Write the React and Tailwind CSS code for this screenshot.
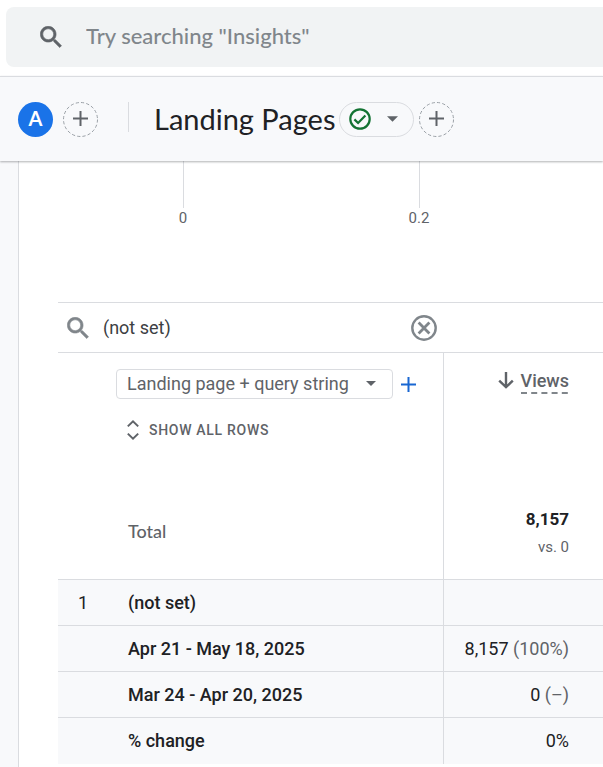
import React, { useState } from 'react';

const ROWS = [
    { index: '1', label: '(not set)' },
    { label: 'Apr 21 - May 18, 2025', value: '8,157', share: '(100%)' },
    { label: 'Mar 24 - Apr 20, 2025', value: '0', share: '(–)' },
    { label: '% change', value: '0%' },
];

const TICKS = ['0', '0.2'];

function SearchIcon({ className }) {
    return (
        <svg viewBox="2.7 2.7 18.2 18.2" fill="currentColor" stroke="currentColor" strokeWidth="0.5" className={className} aria-hidden="true">
            <path d="M15.5 14h-.79l-.28-.27C15.41 12.59 16 11.11 16 9.5 16 5.91 13.09 3 9.5 3S3 5.91 3 9.5 5.91 16 9.5 16c1.61 0 3.09-.59 4.23-1.57l.27.28v.79l5 4.99L20.49 19l-4.99-5zm-6 0C7.01 14 5 11.99 5 9.5S7.01 5 9.5 5 14 7.01 14 9.5 11.99 14 9.5 14z" />
        </svg>
    );
}

function PlusIcon({ className }) {
    return (
        <svg viewBox="0 0 15 15" fill="currentColor" className={className} aria-hidden="true">
            <path d="M6.5 0h2v6.5H15v2H8.5V15h-2V8.5H0v-2h6.5z" />
        </svg>
    );
}

function CaretIcon({ className }) {
    return (
        <svg viewBox="0 0 10 5" fill="currentColor" className={className} aria-hidden="true">
            <path d="M0 0h10L5 5z" />
        </svg>
    );
}

function DashedAddButton({ label }) {
    return (
        <button type="button" aria-label={label} className="relative flex size-[35px] shrink-0 items-center justify-center text-[#5f6368]">
            <svg viewBox="0 0 35 35" fill="none" className="absolute inset-0 size-full" aria-hidden="true">
                <circle cx="17.5" cy="17.5" r="17" stroke="#9aa0a6" strokeDasharray="3.2 2.14" />
            </svg>
            <PlusIcon className="mb-0.5 size-[15px]" />
        </button>
    );
}

function TopSearch() {
    return (
        <div className="bg-white pt-[7px] pb-[9px] pl-1.5">
            <label className="flex h-[60px] items-center rounded-l-lg bg-[#f1f3f4] pl-[34px]">
                <SearchIcon className="size-[22px] shrink-0 text-[#5f6368]" />
                <input
                    type="search"
                    aria-label="Search"
                    placeholder={'Try searching "Insights"'}
                    className="ml-6 min-w-0 flex-1 bg-transparent pb-1 font-[Lato,sans-serif] text-[22px] font-medium text-[#202124] outline-none placeholder:text-[#80868b]"
                />
            </label>
        </div>
    );
}

function ReportHeader() {
    return (
        <header className="relative flex h-[85px] items-center border-t border-[#dadce0] bg-[#f8f9fb] pl-[18px] shadow-[0_1px_2px_rgba(60,64,67,0.4)]">
            <button type="button" className="size-[35px] shrink-0 rounded-full bg-[#1a73e8] pb-0.5 font-[Lato,sans-serif] text-xl font-bold text-white">
                A
            </button>
            <div className="ml-2.5">
                <DashedAddButton label="Add comparison" />
            </div>
            <div className="mb-1 ml-[30px] h-[30px] w-px bg-[#dadce0]" />
            <h1 className="ml-[25px] font-[Lato,sans-serif] text-[29px] whitespace-nowrap text-[#202124]">Landing Pages</h1>
            <button type="button" aria-label="Report status" className="ml-1 flex h-[35px] w-[75px] shrink-0 items-center rounded-full border border-[#dadce0] pl-[9px]">
                <svg viewBox="0 0 22 22" fill="none" stroke="#137333" strokeWidth="2.2" className="size-[22px]" aria-hidden="true">
                    <circle cx="11" cy="11" r="9.7" />
                    <path d="M5.4 11.4l3.7 3.6 7.3-7.4" />
                </svg>
                <CaretIcon className="ml-4 h-[6px] w-[11px] text-[#5f6368]" />
            </button>
            <div className="ml-[5px]">
                <DashedAddButton label="Add to report" />
            </div>
        </header>
    );
}

function ChartAxis() {
    return (
        <div className="flex h-[141px] pl-[46px]">
            {TICKS.map((tick) => (
                <div key={tick} className="flex w-[236px] shrink-0 flex-col items-center">
                    <div className="h-[47px] w-px bg-[#dadce0]" />
                    <span className="text-[15px] leading-5 text-[#5f6368]">{tick}</span>
                </div>
            ))}
        </div>
    );
}

function TableSearch() {
    const [query, setQuery] = useState('(not set)');

    return (
        <div className="flex h-[50px] items-center border-t border-[#dadce0] pl-[9px]">
            <SearchIcon className="size-[22px] shrink-0 text-[#80868b]" />
            <input
                type="text"
                aria-label="Search table"
                value={query}
                onChange={(e) => setQuery(e.target.value)}
                className="ml-3.5 w-[308px] bg-transparent text-lg text-[#3c4043] outline-none"
            />
            <button type="button" aria-label="Clear search" onClick={() => setQuery('')} className="shrink-0 text-[#80868b]">
                <svg viewBox="0 0 26 26" fill="none" stroke="currentColor" className="size-[26px]" aria-hidden="true">
                    <circle cx="13" cy="13" r="11.7" strokeWidth="2.4" />
                    <path d="M7.6 7.6l10.8 10.8M18.4 7.6L7.6 18.4" strokeWidth="2.8" />
                </svg>
            </button>
        </div>
    );
}

function DimensionPicker() {
    return (
        <div className="flex items-center">
            <div className="relative w-[277px]">
                <select
                    aria-label="Primary dimension"
                    className="h-[30px] w-full appearance-none rounded border border-[#dadce0] bg-white pl-2.5 text-lg leading-7 text-[#5f6368]"
                >
                    <option>Landing page + query string</option>
                </select>
                <CaretIcon className="pointer-events-none absolute top-3 right-[17px] h-[5px] w-[10px] text-[#5f6368]" />
            </div>
            <button type="button" aria-label="Add dimension" className="ml-2 text-[#1967d2]">
                <PlusIcon className="size-[15px]" />
            </button>
        </div>
    );
}

function ReportTable() {
    return (
        <table className="w-full table-fixed border-collapse text-lg text-[#202124]">
            <colgroup>
                <col className="w-[50px]" />
                <col className="w-[335px]" />
                <col />
            </colgroup>
            <thead>
                <tr className="h-[130px] border-t border-[#dadce0] align-top">
                    <th colSpan={2} scope="col" className="border-r border-[#dadce0] pt-4 pl-[58px] text-left font-normal">
                        <DimensionPicker />
                        <button type="button" className="mt-[21px] ml-[11px] flex items-center text-sm font-medium tracking-wider text-[#5f6368]">
                            <svg viewBox="0 0 12 20" fill="none" stroke="currentColor" strokeWidth="2" className="mr-2.5 h-5 w-3" aria-hidden="true">
                                <path d="M.8 6.4L6 1.4l5.2 5M.8 13.6l5.2 5 5.2-5" />
                            </svg>
                            SHOW ALL ROWS
                        </button>
                    </th>
                    <th scope="col" aria-sort="descending" className="pt-4 pr-[34px] font-medium">
                        <button type="button" className="ml-auto flex items-start text-[#5f6368]">
                            <svg viewBox="0 0 16 17" fill="none" stroke="currentColor" strokeWidth="2.4" className="mt-[3px] mr-[7px] h-[17px] w-4" aria-hidden="true">
                                <path d="M8 0v15M1.2 8.6L8 15.2l6.8-6.6" />
                            </svg>
                            <span className="flex flex-col text-lg leading-[23px]">
                                Views
                                <svg viewBox="0 0 47 2" preserveAspectRatio="xMinYMin slice" className="h-[2px] w-[47px]" aria-hidden="true">
                                    <path d="M0 1h47" stroke="#80868b" strokeWidth="2" strokeDasharray="6 4.2" />
                                </svg>
                            </span>
                        </button>
                    </th>
                </tr>
                <tr className="h-[97px] text-[#5f6368]">
                    <td />
                    <th scope="row" className="border-r border-[#dadce0] pl-5 text-left font-[Lato,sans-serif] text-lg font-medium">Total</th>
                    <td className="pt-1 pr-[34px] text-right">
                        <div className="text-[17px] leading-6 font-bold text-[#202124]">8,157</div>
                        <div className="mt-1 text-[15px] leading-6">vs. 0</div>
                    </td>
                </tr>
            </thead>
            <tbody>
                {ROWS.map((row) => (
                    <tr key={row.label} className="h-[46px] border-t border-[#dadce0] bg-[#f8f9fb]">
                        <td className="text-center">{row.index}</td>
                        <th scope="row" className="border-r border-[#dadce0] pl-5 text-left font-medium">{row.label}</th>
                        <td className="pr-[34px] text-right">
                            {row.value}
                            {row.share && <span className="text-[#5f6368]"> {row.share}</span>}
                        </td>
                    </tr>
                ))}
            </tbody>
        </table>
    );
}

export default function App() {
    return (
        <div className="flex min-h-screen flex-col overflow-hidden bg-[#f8f9fb] font-[Roboto,sans-serif]">
            <TopSearch />
            <ReportHeader />
            <main className="ml-[18px] flex-1 border-l border-[#dadce0] bg-white">
                <ChartAxis />
                <section className="ml-[39px]">
                    <TableSearch />
                    <ReportTable />
                </section>
            </main>
        </div>
    );
}
